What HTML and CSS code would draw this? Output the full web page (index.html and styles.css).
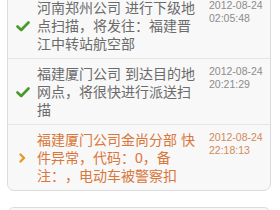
FILE: index.html
```html
<!DOCTYPE html>
<html lang="zh-CN">
<head>
<meta charset="utf-8">
<title>物流跟踪</title>
<link rel="stylesheet" href="styles.css">
</head>
<body>
<div class="feed">
  <div class="card">
    <div class="row">
      <div class="icon"><svg width="14" height="11" viewBox="0 0 14 11"><path d="M1.5 5.5 L5.2 9 L12.5 1.5" fill="none" stroke="#4a9a2b" stroke-width="2.6" stroke-linecap="round" stroke-linejoin="round"/></svg></div>
      <div class="text">河南郑州公司 进行下级地点扫描，将发往：福建晋江中转站航空部</div>
      <div class="date">2012-08-24<br>02:05:48</div>
    </div>
    <div class="row">
      <div class="icon"><svg width="14" height="11" viewBox="0 0 14 11"><path d="M1.5 5.5 L5.2 9 L12.5 1.5" fill="none" stroke="#4a9a2b" stroke-width="2.6" stroke-linecap="round" stroke-linejoin="round"/></svg></div>
      <div class="text">福建厦门公司 到达目的地网点，将很快进行派送扫描</div>
      <div class="date">2012-08-24<br>20:21:29</div>
    </div>
    <div class="row row-alert">
      <div class="icon"><svg width="7" height="10" viewBox="0 0 7 10"><path d="M1.5 1.5 L5 5 L1.5 8.5" fill="none" stroke="#e59a22" stroke-width="2.4" stroke-linecap="round" stroke-linejoin="round"/></svg></div>
      <div class="text">福建厦门公司金尚分部 快件异常，代码：0，备注：，电动车被警察扣</div>
      <div class="date">2012-08-24<br>22:18:13</div>
    </div>
  </div>
  <div class="card card-next">
    <div class="row">
      <div class="icon"></div>
      <div class="text">&nbsp;</div>
      <div class="date">&nbsp;</div>
    </div>
  </div>
</div>
</body>
</html>
```

FILE: styles.css
```css
html, body {
  margin: 0;
  padding: 0;
  background: #ffffff;
}
body {
  font-family: "Liberation Sans", "Noto Sans CJK SC", sans-serif;
  overflow: hidden;
}
.feed {
  margin-top: -8px;
  display: flex;
  flex-direction: column;
  gap: 16px;
}
.card {
  margin: 0 9px 0 7px;
  background: #f8f8f8;
  border: 1px solid #dcdcdc;
  border-radius: 7px;
}
.row {
  display: flex;
  align-items: center;
  padding: 6px 0 5px;
  border-bottom: 1px solid #e6e6e6;
}
.row:last-child {
  border-bottom: none;
}
.icon {
  flex: 0 0 29px;
  display: flex;
  justify-content: center;
  align-items: center;
}
.icon svg {
  display: block;
}
.text {
  flex: 1 1 auto;
  min-width: 0;
  font-size: 14px;
  line-height: 18px;
  color: #6b6b6b;
  align-self: flex-start;
  text-spacing-trim: space-all;
}
.date {
  flex: 0 0 61px;
  margin-left: 13px;
  font-size: 10.5px;
  line-height: 13px;
  color: #8c8c8c;
  align-self: flex-start;
}
.row-alert .text {
  color: #d9773a;
}
.row-alert .date {
  color: #d28a58;
}
.card-next .row {
  height: 60px;
}
```
